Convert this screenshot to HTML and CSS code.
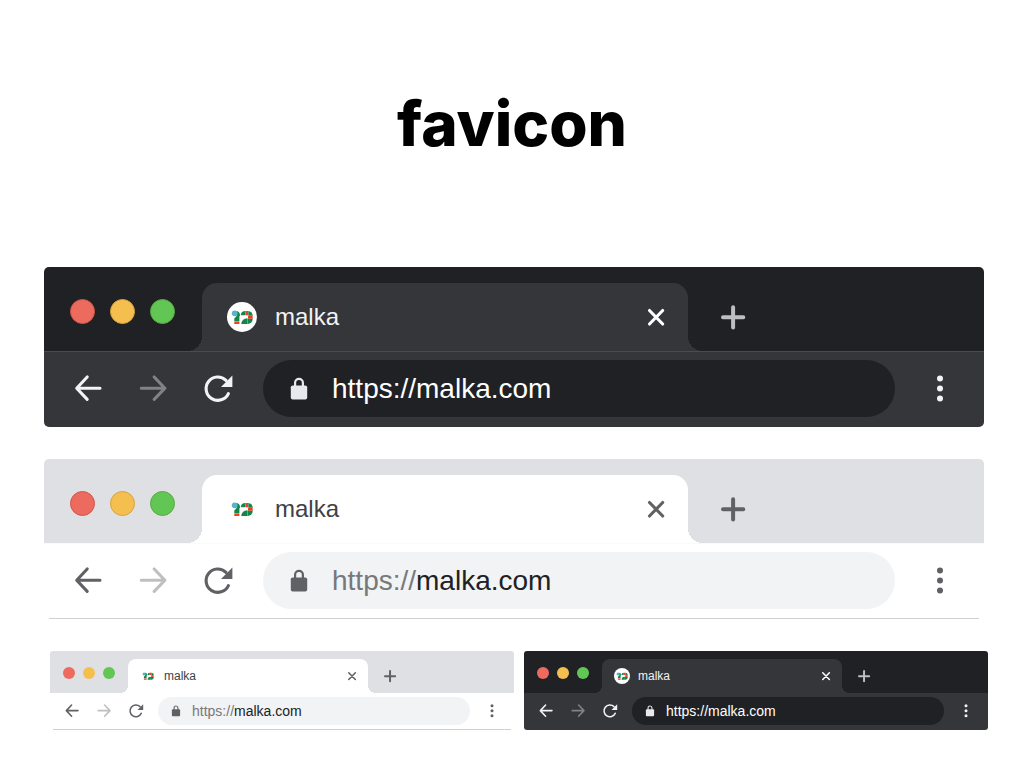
FILE: index.html
```
<!DOCTYPE html>
<html lang="en">
<head>
    <meta charset="UTF-8">
    <meta name="viewport" content="width=device-width, initial-scale=1">
    <title>favicon</title>

    <link rel="stylesheet" href="styles.css">
</head>
<body>

<!-- shared icons -->
<svg class="sprite" aria-hidden="true">
    <symbol id="back" viewBox="0 0 32 32">
        <path class="line" d="M28 15.2H5M15.2 4 4.7 15.2 15.2 26.4"/>
    </symbol>
    <symbol id="forward" viewBox="0 0 32 32">
        <path class="line" d="M4.3 15.2H27.5M17.2 4 27.9 15.2 17.2 26.4"/>
    </symbol>
    <symbol id="reload" viewBox="0 0 32 32">
        <path class="line" d="M24 7.3A11.7 11.7 0 1 0 26.4 20.6"/>
        <path d="M30.4 2.6V14H19Z"/>
    </symbol>
    <symbol id="lock" viewBox="0 0 32 32">
        <path d="M9.7 12.4H22.3A2 2 0 0 1 24.2 14.3V24.6A2 2 0 0 1 22.3 26.5H9.7A2 2 0 0 1 7.8 24.6V14.3A2 2 0 0 1 9.7 12.4Z"/>
        <path class="line thin" d="M12.1 13V9.8A3.9 3.9 0 0 1 19.9 9.8V13"/>
    </symbol>
    <symbol id="dots" viewBox="0 0 32 32">
        <circle cx="16" cy="5.4" r="3"/>
        <circle cx="16" cy="15.5" r="3"/>
        <circle cx="16" cy="25.6" r="3"/>
    </symbol>
    <symbol id="close" viewBox="0 0 32 32">
        <path class="line" d="M9.5 9.5 22.7 23M22.7 9.5 9.5 23"/>
    </symbol>
    <symbol id="plus" viewBox="0 0 32 32">
        <path class="line thick" d="M6 16.3H26.3M16.1 6.2V26.5"/>
    </symbol>
    <symbol id="logo" viewBox="0 0 30 30">
        <path fill="#14864b" d="M9 9A4 4 0 0 1 13 13.4L12.4 14.5V19.3H7.3V16.5L10 13.5Z"/>
        <path fill="#f03e23" d="M7.3 19.5H12.4V22H7.3Z"/>
        <circle cx="7.7" cy="11.3" r="2.9" fill="#58b4cb"/>
        <path fill="#14864b" d="M13.8 13.2A4.5 4.5 0 0 1 18.3 9V13.2Z"/>
        <path fill="#f03e23" d="M18.4 9H21.2V13.2H18.4Z"/>
        <path fill="#14864b" d="M21.3 9A4.5 4.5 0 0 1 25.7 13.7H21.3Z"/>
        <path fill="#f03e23" d="M21 13.8H25.7V16.7H21Z"/>
        <path fill="#14864b" d="M25.7 16.8A5 5 0 0 1 20.5 22V16.8Z"/>
        <path fill="#14864b" d="M14.2 22A6 6 0 0 1 20.4 16.2V22Z"/>
    </symbol>
</svg>

<h1>favicon</h1>

<main>
    <section class="browser dark">
        <div class="strip">
            <div class="lights">
                <button class="light red" aria-label="Close window"></button>
                <button class="light yellow" aria-label="Minimize"></button>
                <button class="light green" aria-label="Full screen"></button>
            </div>
            <div class="tab">
                <svg class="favicon"><use href="#logo"/></svg>
                <span class="tab-title">malka</span>
                <button class="close" aria-label="Close tab"><svg class="icon"><use href="#close"/></svg></button>
            </div>
            <button class="new-tab" aria-label="New tab"><svg class="icon"><use href="#plus"/></svg></button>
        </div>
        <div class="toolbar">
            <button aria-label="Back"><svg class="icon"><use href="#back"/></svg></button>
            <button class="off" aria-label="Forward"><svg class="icon"><use href="#forward"/></svg></button>
            <button aria-label="Reload"><svg class="icon"><use href="#reload"/></svg></button>
            <label class="address">
                <svg class="icon lock"><use href="#lock"/></svg>
                <span class="scheme">https://</span>
                <input type="text" value="malka.com" spellcheck="false">
            </label>
            <button aria-label="Menu"><svg class="icon"><use href="#dots"/></svg></button>
        </div>
    </section>

    <section class="browser">
        <div class="strip">
            <div class="lights">
                <button class="light red" aria-label="Close window"></button>
                <button class="light yellow" aria-label="Minimize"></button>
                <button class="light green" aria-label="Full screen"></button>
            </div>
            <div class="tab">
                <svg class="favicon"><use href="#logo"/></svg>
                <span class="tab-title">malka</span>
                <button class="close" aria-label="Close tab"><svg class="icon"><use href="#close"/></svg></button>
            </div>
            <button class="new-tab" aria-label="New tab"><svg class="icon"><use href="#plus"/></svg></button>
        </div>
        <div class="toolbar">
            <button aria-label="Back"><svg class="icon"><use href="#back"/></svg></button>
            <button class="off" aria-label="Forward"><svg class="icon"><use href="#forward"/></svg></button>
            <button aria-label="Reload"><svg class="icon"><use href="#reload"/></svg></button>
            <label class="address">
                <svg class="icon lock"><use href="#lock"/></svg>
                <span class="scheme">https://</span>
                <input type="text" value="malka.com" spellcheck="false">
            </label>
            <button aria-label="Menu"><svg class="icon"><use href="#dots"/></svg></button>
        </div>
    </section>

    <div class="pair">
        <section class="browser small">
            <div class="strip">
                <div class="lights">
                    <button class="light red" aria-label="Close window"></button>
                    <button class="light yellow" aria-label="Minimize"></button>
                    <button class="light green" aria-label="Full screen"></button>
                </div>
                <div class="tab">
                    <svg class="favicon"><use href="#logo"/></svg>
                    <span class="tab-title">malka</span>
                    <button class="close" aria-label="Close tab"><svg class="icon"><use href="#close"/></svg></button>
                </div>
                <button class="new-tab" aria-label="New tab"><svg class="icon"><use href="#plus"/></svg></button>
            </div>
            <div class="toolbar">
                <button aria-label="Back"><svg class="icon"><use href="#back"/></svg></button>
                <button class="off" aria-label="Forward"><svg class="icon"><use href="#forward"/></svg></button>
                <button aria-label="Reload"><svg class="icon"><use href="#reload"/></svg></button>
                <label class="address">
                    <svg class="icon lock"><use href="#lock"/></svg>
                    <span class="scheme">https://</span>
                    <input type="text" value="malka.com" spellcheck="false">
                </label>
                <button aria-label="Menu"><svg class="icon"><use href="#dots"/></svg></button>
            </div>
        </section>

        <section class="browser small dark">
            <div class="strip">
                <div class="lights">
                    <button class="light red" aria-label="Close window"></button>
                    <button class="light yellow" aria-label="Minimize"></button>
                    <button class="light green" aria-label="Full screen"></button>
                </div>
                <div class="tab">
                    <svg class="favicon"><use href="#logo"/></svg>
                    <span class="tab-title">malka</span>
                    <button class="close" aria-label="Close tab"><svg class="icon"><use href="#close"/></svg></button>
                </div>
                <button class="new-tab" aria-label="New tab"><svg class="icon"><use href="#plus"/></svg></button>
            </div>
            <div class="toolbar">
                <button aria-label="Back"><svg class="icon"><use href="#back"/></svg></button>
                <button class="off" aria-label="Forward"><svg class="icon"><use href="#forward"/></svg></button>
                <button aria-label="Reload"><svg class="icon"><use href="#reload"/></svg></button>
                <label class="address">
                    <svg class="icon lock"><use href="#lock"/></svg>
                    <span class="scheme">https://</span>
                    <input type="text" value="malka.com" spellcheck="false">
                </label>
                <button aria-label="Menu"><svg class="icon"><use href="#dots"/></svg></button>
            </div>
        </section>
    </div>
</main>

</body>
</html>
```
FILE: styles.css
```
* {
    box-sizing: border-box;
}

body {
    margin: 0;
    background: #fff;
    font-family: "Liberation Sans", Arial, sans-serif;
}

h1 {
    margin: 0;
    padding: 84px 0 103px;
    font: 800 62px/80px Inter, sans-serif;
    text-align: center;
    color: #000;
}

main {
    display: flex;
    flex-direction: column;
    gap: 32px;
    padding: 0 40px 36px 44px;
}

button {
    display: block;
    flex: none;
    margin: 0;
    padding: 0;
    border: 0;
    background: none;
    color: inherit;
}

.sprite {
    display: none;
}

.line {
    fill: none;
    stroke: currentColor;
    stroke-width: 3.1;
    stroke-linecap: round;
    stroke-linejoin: round;
}

.thin {
    stroke-width: 2.2;
}

.thick {
    stroke-width: 4;
}

/* light theme, full size */
.browser {
    --strip: #dee0e4;
    --bar: #fff;
    --edge: #fafafb;
    --field: #f1f3f4;
    --ink: #5f6165;
    --plus: #5f6165;
    --text: #404145;
    --url: #202124;
    --scheme: #77787b;
    --radius: 5px;
    --curve: 15px;
    --icon: 32px;
    min-width: 0;
    border-radius: var(--radius);
    overflow: hidden;
    color: var(--ink);
}

.browser.dark {
    --strip: #202124;
    --bar: #35363a;
    --edge: #4a4b4f;
    --field: #202124;
    --ink: #f1f3f4;
    --plus: #bdbec3;
    --text: #f1f3f4;
    --url: #fff;
    --scheme: #fff;
}

.icon {
    display: block;
    width: var(--icon);
    height: var(--icon);
    fill: currentColor;
}

.strip {
    display: grid;
    grid-template-columns: 158px 23fr 14fr;
    height: 84px;
    background: var(--strip);
}

.lights {
    display: flex;
    align-items: center;
    gap: 15px;
    padding: 4px 0 0 26px;
}

.light {
    width: 25px;
    height: 25px;
    border: 1px solid;
    border-radius: 50%;
}

.red {
    background: #ed6a5f;
    border-color: #d15549;
}

.yellow {
    background: #f5bf50;
    border-color: #d8a13b;
}

.green {
    background: #62c655;
    border-color: #57aa43;
}

.tab {
    position: relative;
    display: flex;
    align-items: center;
    margin-top: 16px;
    padding: 0 16px 0 25px;
    border-radius: var(--curve) var(--curve) 0 0;
    background: var(--bar);
}

/* the two feet that curve out into the toolbar */
.tab::before,
.tab::after {
    content: "";
    position: absolute;
    bottom: 0;
    width: var(--curve);
    height: var(--curve);
}

.tab::before {
    right: 100%;
    background: radial-gradient(circle at 0 0, transparent var(--curve), var(--bar) var(--curve));
}

.tab::after {
    left: 100%;
    background: radial-gradient(circle at 100% 0, transparent var(--curve), var(--bar) var(--curve));
}

.favicon {
    flex: none;
    width: 30px;
    height: 30px;
    margin-right: 18px;
    border-radius: 50%;
    background: #fff;
}

.tab-title {
    flex: 1;
    font-size: 24px;
    color: var(--text);
}

.dark .close {
    color: #fff;
}

.new-tab {
    justify-self: start;
    padding: 16px 0 0 29px;
    color: var(--plus);
}

.toolbar {
    display: flex;
    align-items: center;
    gap: 33px;
    padding: 8px 28px 10px;
    border-top: 1px solid var(--edge);
    background: var(--bar);
}

.browser:not(.dark) .toolbar {
    padding-bottom: 9px;
}

/* hairline under the light window */
.browser:not(.dark)::after {
    content: "";
    display: block;
    height: 1px;
    margin: 0 var(--radius);
    background: #cfd0d2;
}

.off {
    opacity: .4;
}

.address {
    display: flex;
    flex: 1;
    align-items: center;
    min-width: 0;
    height: 57px;
    margin: 0 -4px;
    padding: 0 20px;
    border-radius: 29px;
    background: var(--field);
    font-size: 28px;
    color: var(--url);
}

.lock {
    flex: none;
    margin-right: 17px;
    color: var(--ink);
}

.dark .lock {
    color: #e8e9ea;
}

.scheme {
    color: var(--scheme);
}

.address input {
    flex: 1;
    min-width: 0;
    padding: 0;
    border: 0;
    outline: 0;
    background: none;
    font: inherit;
    color: inherit;
}

/* half size */
.pair {
    display: grid;
    grid-template-columns: 1fr 1fr;
    gap: 10px;
    margin: 0 -4px 0 6px;
}

.small {
    --radius: 3px;
    --curve: 8px;
    --icon: 16px;
}

.small .strip {
    grid-template-columns: 78px 23fr 14fr;
    height: 42px;
}

.small .lights {
    gap: 8px;
    padding: 2px 0 0 13px;
}

.small .light {
    width: 12px;
    height: 12px;
    border: 0;
}

.small .tab {
    margin-top: 8px;
    padding: 0 8px 0 12px;
}

.small .favicon {
    width: 16px;
    height: 16px;
    margin-right: 8px;
}

.small .tab-title {
    font-size: 12px;
}

.small .new-tab {
    padding: 8px 0 0 14px;
}

.small .toolbar {
    gap: 16px;
    padding: 4px 14px 5px;
    border-top: 0;
}

.small:not(.dark) .toolbar {
    padding-bottom: 4px;
}

.small .address {
    height: 28px;
    margin: 0 -2px;
    padding: 0 10px;
    border-radius: 14px;
    font-size: 14px;
}

.small .lock {
    margin-right: 8px;
}
```
